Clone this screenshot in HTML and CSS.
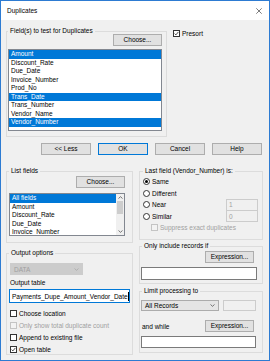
FILE: index.html
```html
<!DOCTYPE html>
<html>
<head>
    <link rel="stylesheet" href="styles.css">
</head>
<body>
<div class="window">
    <div class="titlebar">
        <span class="title">Duplicates</span>
        <svg class="close" width="6" height="6" viewBox="0 0 6 6"><path d="M0.3 0.3L5.7 5.7M5.7 0.3L0.3 5.7" stroke="#444" stroke-width="0.7"/></svg>
    </div>
    <div class="dialog">
        <div class="top-row">
            <fieldset class="group fields-group">
                <legend>Field(s) to test for Duplicates</legend>
                <div class="btn-line"><button class="btn">Choose...</button></div>
                <div class="listbox fields-list">
                    <div class="item selected">Amount</div>
                    <div class="item">Discount_Rate</div>
                    <div class="item">Due_Date</div>
                    <div class="item">Invoice_Number</div>
                    <div class="item">Prod_No</div>
                    <div class="item selected">Trans_Date</div>
                    <div class="item">Trans_Number</div>
                    <div class="item">Vendor_Name</div>
                    <div class="item selected">Vendor_Number</div>
                </div>
            </fieldset>
            <div class="check presort">
                <span class="box checked"><svg width="5" height="5" viewBox="0 0 5 5"><path d="M0.6 2.6L1.9 3.9L4.4 0.9" fill="none" stroke="#222" stroke-width="0.8"/></svg></span>
                <span>Presort</span>
            </div>
        </div>

        <div class="button-row">
            <button class="btn wide">&lt;&lt; Less</button>
            <button class="btn wide default">OK</button>
            <button class="btn wide">Cancel</button>
            <button class="btn wide">Help</button>
        </div>

        <div class="columns">
            <div class="col left-col">
                <fieldset class="group list-group">
                    <legend>List fields</legend>
                    <div class="btn-line"><button class="btn">Choose...</button></div>
                    <div class="listbox list-fields">
                        <div class="items">
                            <div class="item selected">All fields</div>
                            <div class="item">Amount</div>
                            <div class="item">Discount_Rate</div>
                            <div class="item">Due_Date</div>
                            <div class="item">Invoice_Number</div>
                            <div class="item">Prod_No</div>
                        </div>
                        <div class="scrollbar">
                            <div class="arrow"><svg width="5" height="3" viewBox="0 0 5 3"><path d="M0.5 2.5L2.5 0.7L4.5 2.5" fill="none" stroke="#555" stroke-width="0.8"/></svg></div>
                            <div class="thumb"></div>
                            <div class="track"></div>
                            <div class="arrow"><svg width="5" height="3" viewBox="0 0 5 3"><path d="M0.5 0.5L2.5 2.3L4.5 0.5" fill="none" stroke="#555" stroke-width="0.8"/></svg></div>
                        </div>
                    </div>
                </fieldset>

                <fieldset class="group output-group">
                    <legend>Output options</legend>
                    <div class="select disabled data-select">
                        <span>DATA</span>
                        <svg width="5" height="3" viewBox="0 0 5 3"><path d="M0.5 0.5L2.5 2.3L4.5 0.5" fill="none" stroke="#a8a8a8" stroke-width="0.8"/></svg>
                    </div>
                    <div class="field-label">Output table</div>
                    <div class="textbox focused table-input">Payments_Dupe_Amount_Vendor_Date<span class="caret"></span></div>
                    <div class="check-list">
                        <div class="check"><span class="box"></span><span>Choose location</span></div>
                        <div class="check disabled"><span class="box"></span><span>Only show total duplicate count</span></div>
                        <div class="check"><span class="box"></span><span>Append to existing file</span></div>
                        <div class="check">
                            <span class="box checked"><svg width="5" height="5" viewBox="0 0 5 5"><path d="M0.6 2.6L1.9 3.9L4.4 0.9" fill="none" stroke="#222" stroke-width="0.8"/></svg></span>
                            <span>Open table</span>
                        </div>
                    </div>
                </fieldset>
            </div>

            <div class="col right-col">
                <fieldset class="group last-group">
                    <legend>Last field (Vendor_Number) is:</legend>
                    <div class="radio-row"><span class="radio on"></span><span>Same</span></div>
                    <div class="radio-row"><span class="radio"></span><span>Different</span></div>
                    <div class="radio-row"><span class="radio"></span><span>Near</span><span class="textbox disabled small-input">1</span></div>
                    <div class="radio-row"><span class="radio"></span><span>Similar</span><span class="textbox disabled small-input">0</span></div>
                    <div class="radio-row suppress"><div class="check disabled"><span class="box"></span><span>Suppress exact duplicates</span></div></div>
                </fieldset>

                <fieldset class="group include-group">
                    <legend>Only include records if</legend>
                    <div class="btn-line"><button class="btn expr">Expression...</button></div>
                    <div class="textbox expr-input"></div>
                </fieldset>

                <fieldset class="group limit-group">
                    <legend>Limit processing to</legend>
                    <div class="limit-row">
                        <div class="select records-select">
                            <span>All Records</span>
                            <svg width="5" height="3" viewBox="0 0 5 3"><path d="M0.5 0.5L2.5 2.3L4.5 0.5" fill="none" stroke="#555" stroke-width="0.8"/></svg>
                        </div>
                        <span class="textbox disabled count-input"></span>
                    </div>
                    <div class="while-row">
                        <span>and while</span>
                        <button class="btn expr">Expression...</button>
                    </div>
                    <div class="textbox while-input"></div>
                </fieldset>
            </div>
        </div>
    </div>
</div>
</body>
</html>
```

FILE: styles.css
```css
* {
    box-sizing: border-box;
}

body {
    margin: 0;
    font-family: "Liberation Sans", Arial, sans-serif;
    font-size: 6.5px;
    color: #000;
}

.window {
    width: 270px;
    height: 361px;
    border: 1px solid #2d7bd2;
    background-color: #f0f0f0;
}

.titlebar {
    height: 19px;
    background-color: #fff;
    display: flex;
    align-items: center;
    justify-content: space-between;
    padding: 0 7px 0 6px;
}

.dialog {
    padding: 7px 6px 0 5px;
}

/* group boxes */

.group {
    margin: 0;
    min-width: 0;
    border: 1px solid #dcdcdc;
    padding: 0 4px 5px 2px;
}

.group legend {
    padding: 0 2px;
    line-height: 8px;
    font-size: 6.5px;
}

.btn-line {
    display: flex;
    justify-content: flex-end;
}

.btn {
    width: 49px;
    height: 12px;
    padding: 0;
    border: 1px solid #adadad;
    background-color: #e1e1e1;
    font-family: inherit;
    font-size: 6.5px;
    color: #000;
    line-height: 10px;
}

.btn.default {
    border-color: #0078d7;
}

/* top part */

.top-row {
    display: flex;
    align-items: flex-start;
}

.fields-group {
    width: 161px;
    padding: 0 4px 5px 1px;
}

.fields-group .btn-line {
    margin-top: -1px;
}

.listbox {
    border: 1px solid #828790;
    background-color: #fff;
    overflow: hidden;
}

.fields-list {
    height: 82px;
    margin-top: 3px;
}

.item {
    height: 8.5px;
    line-height: 8.5px;
    padding-left: 2px;
    white-space: nowrap;
}

.item.selected {
    background-color: #0078d7;
    color: #fff;
}

.check {
    display: flex;
    align-items: center;
    height: 8px;
    white-space: nowrap;
}

.box {
    width: 7px;
    height: 7px;
    border: 1px solid #333;
    background-color: #fff;
    margin-right: 2px;
    display: flex;
    align-items: center;
    justify-content: center;
    flex-shrink: 0;
}

.check.disabled {
    color: #a0a0a0;
}

.check.disabled .box {
    border-color: #c4c4c4;
    background-color: #f3f3f3;
}

.presort {
    margin: 2px 0 0 6px;
}

.button-row {
    display: flex;
    gap: 7px;
    margin-top: 6px;
    padding-left: 35px;
}

.btn.wide {
    width: 50px;
}

/* lower columns */

.columns {
    display: flex;
    gap: 6px;
    margin-top: 12px;
}

.col {
    display: flex;
    flex-direction: column;
}

.left-col {
    width: 127px;
}

.right-col {
    width: 124px;
}

.list-group {
    padding: 0 7px 6px 2px;
}

.list-group .btn-line {
    margin-top: 1px;
}

.list-fields {
    height: 43px;
    margin-top: 5px;
    display: flex;
}

.list-fields .items {
    flex: 1;
    overflow: hidden;
}

.scrollbar {
    width: 8px;
    display: flex;
    flex-direction: column;
    background-color: #f0f0f0;
}

.arrow {
    height: 7px;
    display: flex;
    align-items: center;
    justify-content: center;
}

.thumb {
    height: 13px;
    margin: 0 1px;
    background-color: #cdcdcd;
}

.track {
    flex: 1;
}

.output-group {
    margin-top: 6px;
    padding: 0 3px 1px 2px;
}

.select {
    display: flex;
    align-items: center;
    justify-content: space-between;
    padding: 0 3px 0 3px;
    border: 1px solid #acacac;
    background-color: #e5e5e5;
}

.select.disabled {
    border-color: #cccccc;
    background-color: #cccccc;
    color: #a0a0a0;
}

.data-select {
    width: 73px;
    height: 12px;
    margin: 6px 0 0 1px;
}

.field-label {
    margin-top: 4px;
    line-height: 8px;
    padding-left: 1px;
}

.textbox {
    display: flex;
    align-items: center;
    border: 1px solid #7a7a7a;
    background-color: #fff;
    padding-left: 2px;
    white-space: nowrap;
    overflow: hidden;
}

.textbox.focused {
    border-color: #0078d7;
}

.textbox.disabled {
    border-color: #cccccc;
    background-color: #f0f0f0;
    color: #a0a0a0;
}

.table-input {
    width: 121px;
    height: 14px;
    margin-top: 2px;
}

.caret {
    width: 1px;
    height: 9px;
    background-color: #000;
}

.check-list {
    display: flex;
    flex-direction: column;
    gap: 4px;
    margin-top: 6px;
    padding-left: 1px;
}

.last-group {
    padding: 1px 4px 5.5px 3px;
}

.radio-row {
    display: flex;
    align-items: center;
    height: 11.5px;
    white-space: nowrap;
}

.radio {
    width: 7px;
    height: 7px;
    border: 1px solid #333;
    border-radius: 50%;
    background-color: #fff;
    margin-right: 2px;
    display: flex;
    align-items: center;
    justify-content: center;
}

.radio.on::after {
    content: "";
    width: 3px;
    height: 3px;
    border-radius: 50%;
    background-color: #000;
}

.small-input {
    width: 32px;
    height: 12px;
    margin-left: auto;
}

.suppress {
    padding-left: 8px;
}

.include-group {
    margin-top: 2px;
    padding: 0 4px 3px 2px;
}

.btn.expr {
    margin-right: 4px;
}

.include-group .btn-line {
    margin-top: 1px;
}

.expr-input {
    width: 116px;
    height: 13px;
    margin: 4px 0 0 -1px;
}

.limit-group {
    margin-top: 3px;
    padding: 0 4px 4px 2px;
}

.limit-row {
    display: flex;
    margin-top: 5px;
}

.records-select {
    width: 78px;
    height: 11px;
    margin-left: -1px;
}

.count-input {
    width: 33px;
    height: 11px;
    margin-left: 4px;
}

.while-row {
    display: flex;
    align-items: center;
    justify-content: space-between;
    margin-top: 9px;
}

.while-input {
    width: 115px;
    height: 12px;
    margin: 4px 0 0 -1px;
}
```
